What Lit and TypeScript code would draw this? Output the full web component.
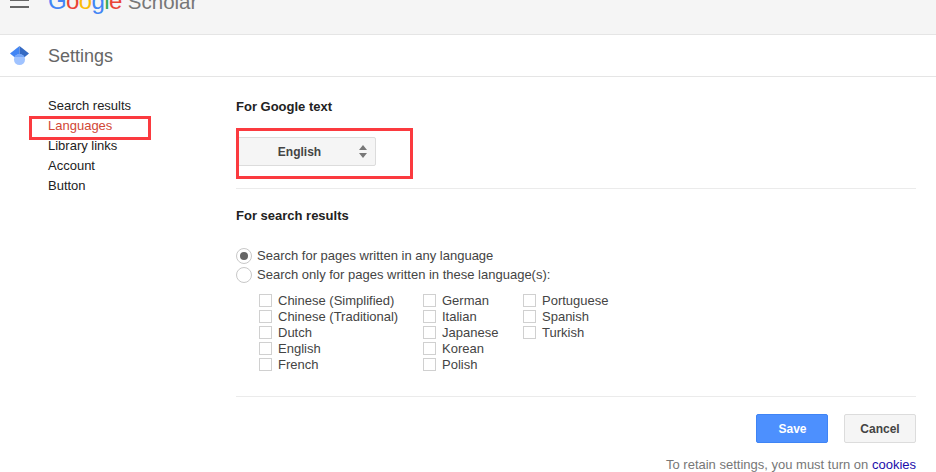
import { LitElement, html, css } from "lit";
import { customElement } from "lit/decorators.js";

const COLS = [
  { w: 164, items: ["Chinese (Simplified)", "Chinese (Traditional)", "Dutch", "English", "French"] },
  { w: 100, items: ["German", "Italian", "Japanese", "Korean", "Polish"] },
  { w: 100, items: ["Portuguese", "Spanish", "Turkish"] },
];

@customElement("app-root")
export class AppRoot extends LitElement {
  static styles = css`
    :host { display: block; width: 936px; height: 472px; overflow: hidden; position: relative; background: #fff; font-family: "Liberation Sans", Arial, sans-serif; font-size: 13px; color: #222; }
    .top { height: 34px; background: #f5f5f5; border-bottom: 1px solid #e5e5e5; display: flex; align-items: flex-start; overflow: hidden; }
    .burger { width: 19px; margin: -1px 0 0 10px; display: flex; flex-direction: column; gap: 5px; flex: none; }
    .burger i { display: block; height: 2px; background: #666; }
    .logo { margin: -14px 0 0 19px; font-size: 24px; line-height: 30px; white-space: nowrap; letter-spacing: -0.6px; }
    .logo .b { color: #4285f4; } .logo .r { color: #ea4335; } .logo .y { color: #fbbc05; } .logo .g { color: #34a853; }
    .logo .s { color: #777; margin-left: 6px; letter-spacing: 0; font-size: 20.500px; }
    .bar { height: 41px; border-bottom: 1px solid #e5e5e5; display: flex; align-items: center; }
    .bar svg { margin-left: 10px; display: block; }
    .bar span { margin-left: 19px; font-size: 18px; color: #666; padding-top: 1px; }
    .body { display: flex; padding-top: 19px; }
    .nav { width: 236px; padding-left: 48px; box-sizing: border-box; flex: none; }
    .nav div { line-height: 20px; height: 20px; }
    .nav .on { color: #d14836; }
    .main { width: 680px; margin-top: -1px; }
    .h { font-weight: bold; line-height: 20px; height: 20px; padding-top: 2px; color: #222; }
    .sel-wrap { padding: 20px 0 22px 0; }
    .sel { width: 140px; height: 29px; box-sizing: border-box; background: #f5f5f5; border: 1px solid #dcdcdc; border-radius: 2px; display: flex; align-items: center; justify-content: center; font-weight: bold; font-size: 12px; color: #444; position: relative; padding-right: 13px; }
    .sel svg { position: absolute; right: 8px; top: 7px; }
    .rule { border-top: 1px solid #ebebeb; }
    .sec { padding-top: 15px; }
    .radios { padding-top: 20px; }
    .radio { display: flex; align-items: center; height: 19px; gap: 5px; color: #444; }
    .dot { border: 1px solid #c8c8c8; border-radius: 50%; background: #fff; display: flex; align-items: center; justify-content: center; box-sizing: border-box; width: 16px; height: 16px; }
    .dot.on::after { content: ""; width: 8px; height: 8px; border-radius: 50%; background: #666; }
    .cols { display: flex; padding: 8px 0 0 23px; height: 104px; }
    .col { flex: none; }
    .chk { display: flex; align-items: center; height: 16px; gap: 6px; color: #444; white-space: nowrap; }
    .box { border: 1px solid #d0d0d0; background: #fff; flex: none; width: 11px; height: 11px; }
    .actions { display: flex; justify-content: flex-end; gap: 16px; padding-top: 17px; }
    .btn { width: 72px; height: 29px; box-sizing: border-box; border-radius: 2px; display: flex; align-items: center; justify-content: center; font-weight: bold; font-size: 12px; }
    .save { background: #4d90fe; border: 1px solid #3f84f5; color: #fff; padding-left: 1px; }
    .cancel { background: #f5f5f5; border: 1px solid #dcdcdc; color: #444; }
    .foot { text-align: right; margin-top: 14px; line-height: 16px; color: #777; }
    .foot a { color: #1a0dab; }
    .mark { position: absolute; border: 3px solid #fb3a3f; box-sizing: border-box; }
    .m1 { left: 29px; top: 116px; width: 122px; height: 24px; }
    .m2 { left: 236px; top: 128px; width: 177px; height: 51px; }
  `;

  render() {
    return html`
      <div class="top">
        <div class="burger"><i></i><i></i></div>
        <div class="logo"><span class="b">G</span><span class="r">o</span><span class="y">o</span><span class="b">g</span><span class="g">l</span><span class="r">e</span><span class="s">Scholar</span></div>
      </div>
      <div class="bar">
        <svg width="19" height="19" viewBox="0 0 512 512"><path fill="#4285f4" d="M256 411.120 0 202.667 256 0z"/><path fill="#356ac3" d="M256 411.120 512 202.667 256 0z"/><circle fill="#a0c3ff" cx="256" cy="362.667" r="149.333"/><path fill="#76a7fa" d="M121.037 298.667c23.968-50.453 75.392-85.334 134.963-85.334s110.995 34.881 134.963 85.334H121.037z"/></svg>
        <span>Settings</span>
      </div>
      <div class="body">
        <div class="nav">
          <div>Search results</div><div class="on">Languages</div><div>Library links</div><div>Account</div><div>Button</div>
        </div>
        <div class="main">
          <div class="h">For Google text</div>
          <div class="sel-wrap">
            <div class="sel">English
              <svg width="8" height="13" viewBox="0 0 8 13"><path d="M4 0 8 5H0zM4 13 0 8h8z" fill="#777"/></svg>
            </div>
          </div>
          <div class="rule"></div>
          <div class="sec"><div class="h">For search results</div></div>
          <div class="radios">
            <div class="radio"><span class="dot on"></span>Search for pages written in any language</div>
            <div class="radio"><span class="dot"></span>Search only for pages written in these language(s):</div>
          </div>
          <div class="cols">
            ${COLS.map(c => html`<div class="col" style="width:${c.w}px">
              ${c.items.map(t => html`<div class="chk"><span class="box"></span>${t}</div>`)}
            </div>`)}
          </div>
          <div class="rule"></div>
          <div class="actions"><div class="btn save">Save</div><div class="btn cancel">Cancel</div></div>
          <div class="foot">To retain settings, you must turn on <a>cookies</a></div>
        </div>
      </div>
      <div class="mark m1"></div>
      <div class="mark m2"></div>
    `;
  }
}
